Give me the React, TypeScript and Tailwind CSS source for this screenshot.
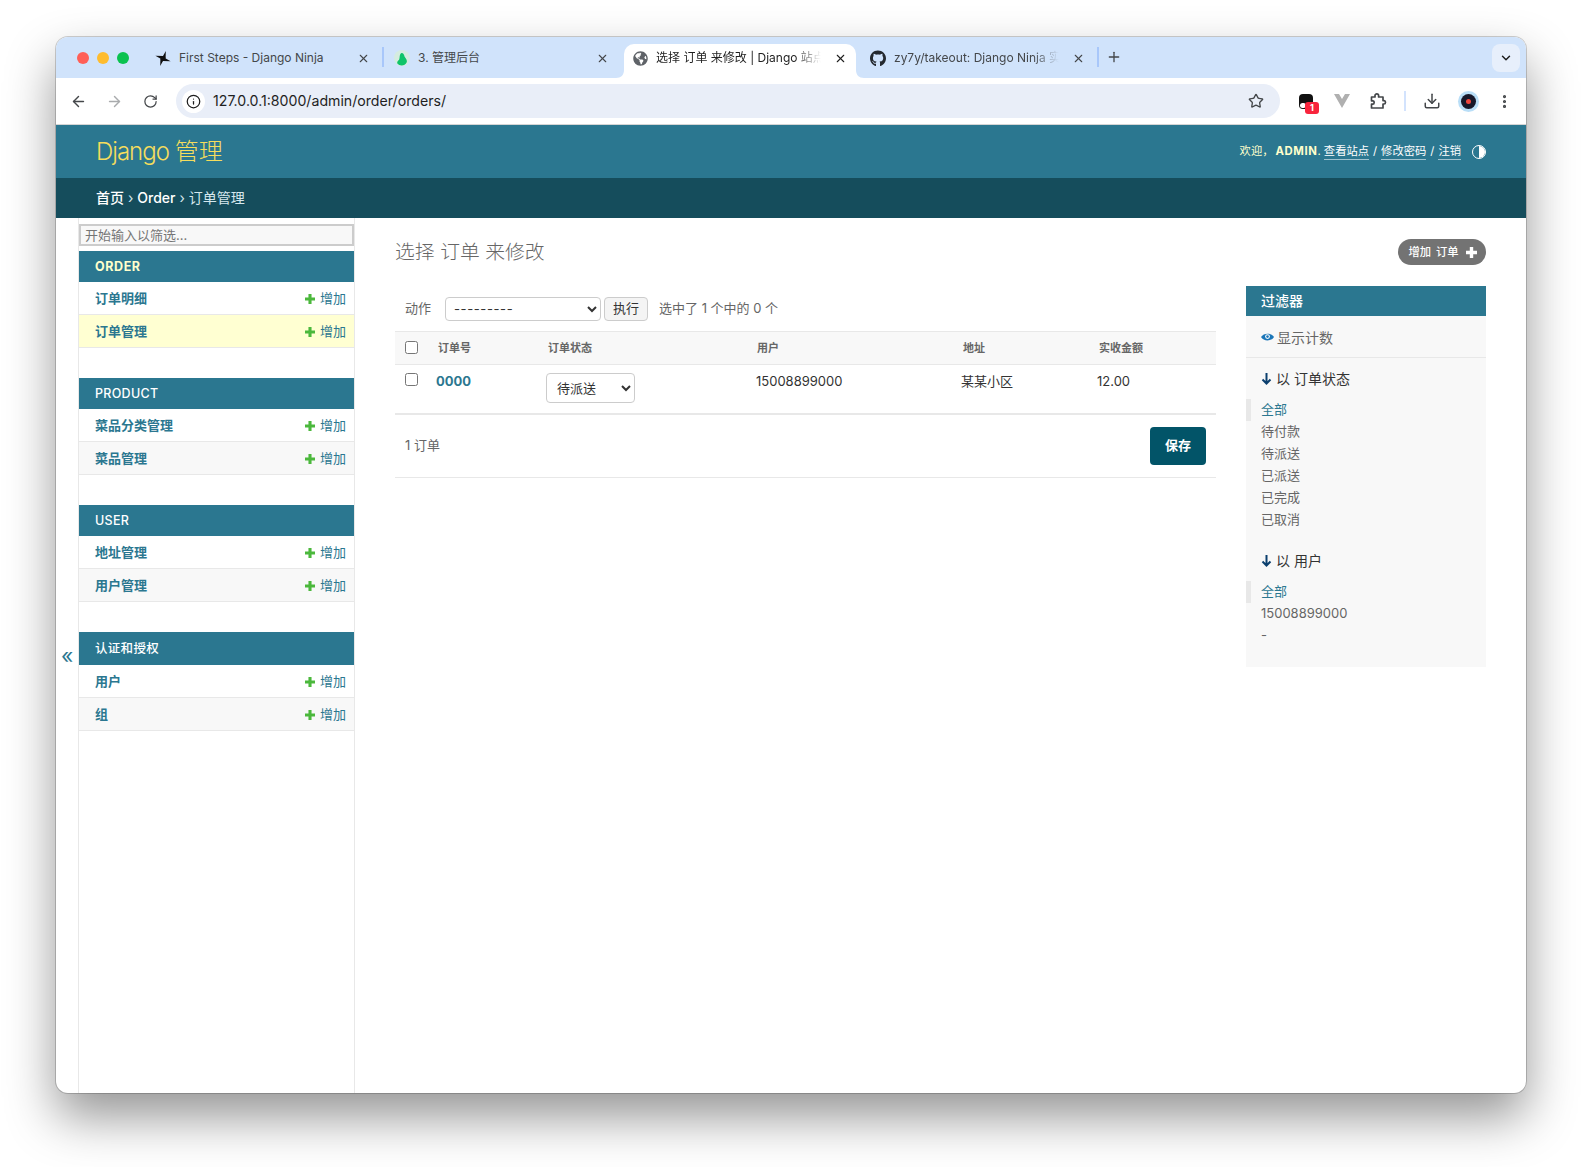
import {
  ArrowLeft,
  ArrowRight,
  ChevronDown,
  Download,
  EllipsisVertical,
  Info,
  Plus,
  RotateCw,
  Star,
  X,
} from "lucide-react";
import { FaGithub, FaGlobeAmericas } from "react-icons/fa";
import type { ReactNode } from "react";

const groups = [
  {
    title: "ORDER",
    active: true,
    rows: ["订单明细", "订单管理"],
  },
  {
    title: "PRODUCT",
    active: false,
    rows: ["菜品分类管理", "菜品管理"],
  },
  {
    title: "USER",
    active: false,
    rows: ["地址管理", "用户管理"],
  },
  {
    title: "认证和授权",
    active: false,
    rows: ["用户", "组"],
  },
];

function Shuriken() {
  const arm = "M5.4 9.4 L8.6 4.4 L10.8 0.4 L10.6 8.2 Z";
  return (
    <svg width="17" height="17" viewBox="0 0 16 16" fill="#111">
      <path d={arm} />
      <path d={arm} transform="rotate(90 8 8)" />
      <path d={arm} transform="rotate(180 8 8)" />
      <path d={arm} transform="rotate(270 8 8)" />
    </svg>
  );
}

function Leaf() {
  return (
    <svg width="16" height="16" viewBox="0 0 16 16">
      <circle cx="8" cy="8" r="8" fill="#d5ecdf" />
      <path d="M7.5 3 C9.8 3 10.2 5.5 10.8 7 C12 8.5 13.5 10.5 12.6 12.6 C11 16.2 5.5 16.4 3.4 13.6 C2.6 12.2 4.2 10.5 5.2 9.5 C6 8 5.2 4 7.5 3 Z" fill="#0fc468" />
    </svg>
  );
}

function AddIcon({ color, size }: { color: string; size: number }) {
  return (
    <svg width={size} height={size} viewBox="0 0 11 11" fill={color}>
      <path d="M3.8 0 H7.2 V3.8 H11 V7.2 H7.2 V11 H3.8 V7.2 H0 V3.8 H3.8 Z" />
    </svg>
  );
}

function Tab({
  icon,
  title,
  active,
  fade,
}: {
  icon: ReactNode;
  title: string;
  active?: boolean;
  fade?: boolean;
}) {
  return (
    <div
      className={
        active
          ? "relative flex h-[34px] w-[232px] items-center rounded-t-[10px] bg-white pb-[6px] pl-[8px] pr-[9px]"
          : "relative flex h-[28px] w-[232px] items-center pl-[8px] pr-[9px]"
      }
    >
      {active && (
        <>
          <svg className="absolute bottom-0 left-[-8px]" width="8" height="8" viewBox="0 0 8 8">
            <path d="M8 0 V8 H0 C5 8 8 5 8 0 Z" fill="#fff" />
          </svg>
          <svg className="absolute bottom-0 right-[-8px]" width="8" height="8" viewBox="0 0 8 8">
            <path d="M0 0 V8 H8 C3 8 0 5 0 0 Z" fill="#fff" />
          </svg>
        </>
      )}
      <span className="flex w-[16px] shrink-0 items-center justify-center">{icon}</span>
      <span
        className={
          (active ? "text-[#1f1f1f] " : "text-[#44474a] ") +
          (fade ? "[mask-image:linear-gradient(to_right,black_82%,transparent_97%)] " : "") +
          "ml-[8px] min-w-0 flex-1 text-[12px] leading-[16px] whitespace-nowrap"
        }
      >
        {title}
      </span>
      <X size={13} strokeWidth={2} className={active ? "ml-[8px] text-[#1f1f1f]" : "ml-[8px] text-[#44474a]"} />
    </div>
  );
}

function Browser() {
  return (
    <>
      <div className="flex h-[41px] items-end bg-[#d0e3fb] pr-[6px]">
        <div className="flex w-[91px] items-center gap-[8px] self-center pl-[21px] pt-[1px]">
          <span className="h-[12px] w-[12px] rounded-full bg-[#ff5f57]" />
          <span className="h-[12px] w-[12px] rounded-full bg-[#febc2e]" />
          <span className="h-[12px] w-[12px] rounded-full bg-[#0ac24f]" />
        </div>
        <div className="flex flex-1 items-end">
          <div className="mb-[6px]">
            <Tab icon={<Shuriken />} title="First Steps - Django Ninja" />
          </div>
          <span className="mx-[2.5px] mb-[11px] h-[20px] w-[2px] bg-[#a8c7fa]" />
          <div className="mb-[6px]">
            <Tab icon={<Leaf />} title="3. 管理后台" />
          </div>
          <span className="w-[6px]" />
          <Tab active fade icon={<FaGlobeAmericas size={15} className="text-[#5f6368]" />} title="选择 订单 来修改 | Django 站点" />
          <span className="w-[6px]" />
          <div className="mb-[6px]">
            <Tab fade icon={<FaGithub size={17} className="text-[#24292f]" />} title="zy7y/takeout: Django Ninja 实" />
          </div>
          <span className="mb-[11px] ml-[3px] h-[20px] w-[2px] bg-[#a8c7fa]" />
          <Plus size={16} strokeWidth={2} className="mb-[13px] ml-[7px] text-[#44474a]" />
        </div>
        <div className="mb-[6px] flex h-[28px] w-[28px] items-center justify-center rounded-[8px] bg-[#e7effb]">
          <ChevronDown size={14} strokeWidth={2.5} className="text-[#1f1f1f]" />
        </div>
      </div>
      <div className="flex h-[47px] items-center rounded-t-[10px] border-b border-[#d5d5d5] bg-white pl-[4px]">
        <div className="flex h-[36px] w-[36px] items-center justify-center">
          <ArrowLeft size={17} strokeWidth={2} className="text-[#44474a]" />
        </div>
        <div className="flex h-[36px] w-[36px] items-center justify-center">
          <ArrowRight size={17} strokeWidth={2} className="text-[#a9abad]" />
        </div>
        <div className="flex h-[36px] w-[36px] items-center justify-center">
          <RotateCw size={15} strokeWidth={2} className="text-[#44474a]" />
        </div>
        <div className="ml-[8px] flex h-[34px] w-[1104px] items-center rounded-full bg-[#e9eef8] pl-[6px] pr-[16px]">
          <span className="flex h-[23px] w-[23px] items-center justify-center rounded-full bg-white">
            <Info size={15} strokeWidth={2} className="text-[#1f1f1f]" />
          </span>
          <span className="ml-[8px] flex-1 text-[14.15px] leading-[18px] text-[#1f1f1f]">127.0.0.1:8000/admin/order/orders/</span>
          <Star size={16} strokeWidth={2} className="text-[#44474a]" />
        </div>
        <div className="ml-[8px] flex h-[36px] w-[36px] items-center justify-center">
          <span className="relative h-[15px] w-[14px] rounded-[4px] bg-[#111]">
            <span className="absolute bottom-[1px] left-[1px] h-[5px] w-[6px] rounded-full bg-white" />
            <span className="absolute left-[6px] top-[8px] flex h-[12px] w-[14px] items-center justify-center rounded-[3px] bg-[#f8243c] text-[9px] font-bold leading-none text-white">1</span>
          </span>
        </div>
        <div className="flex h-[36px] w-[36px] items-center justify-center">
          <svg width="16" height="16" viewBox="0 0 16 16">
            <path d="M0 1 H5 L8 6 L11 1 H16 L8 15 Z" fill="#b0b0b0" />
          </svg>
        </div>
        <div className="flex h-[36px] w-[36px] items-center justify-center">
          <svg width="18" height="18" viewBox="0 0 18 18" fill="none" stroke="#44474a" strokeWidth="1.7" strokeLinejoin="round">
            <path d="M2.5 5 H6 V3.6 C6 1.4 9.6 1.4 9.6 3.6 V5 H14 V8.6 H15 C17 8.6 17 12 15 12 H14 V16 H2.5 V12.2 H3.8 C5.6 12.2 5.6 8.8 3.8 8.8 H2.5 Z" />
          </svg>
        </div>
        <span className="mx-[8px] h-[20px] w-[2px] bg-[#d3e3fd]" />
        <div className="flex h-[36px] w-[36px] items-center justify-center">
          <Download size={18} strokeWidth={2} className="text-[#44474a]" />
        </div>
        <div className="flex h-[36px] w-[36px] items-center justify-center">
          <span className="flex h-[21px] w-[21px] items-center justify-center rounded-full bg-[#b9def7]">
            <span className="flex h-[15px] w-[15px] items-center justify-center rounded-full bg-[#17182a]">
              <span className="h-[5px] w-[5px] rounded-full bg-[#f0443c]" />
            </span>
          </span>
        </div>
        <div className="flex h-[36px] w-[36px] items-center justify-center">
          <EllipsisVertical size={17} strokeWidth={2.5} className="text-[#44474a]" />
        </div>
      </div>
    </>
  );
}

function Sidebar() {
  return (
    <div className="flex shrink-0">
      <div className="flex w-[22px] items-start justify-center pt-[423px] text-[21px] leading-[30px] text-[#2b7790]">«</div>
      <div className="w-[277px] border-x border-[#e8e8e8]">
        <div className="mb-[5px] mt-[6px] h-[22px]">
          <input
            placeholder="开始输入以筛选..."
            className="block h-[22px] w-full border-2 border-[#cccccc] bg-[#f8f8f8] px-[4px] text-[13px] outline-none placeholder:text-[#757575]"
          />
        </div>
        {groups.map((group, g) => (
          <div key={group.title} className="mb-[30px]">
            <h2
              className={
                (g === 3 ? "h-[33px] " : "h-[31px] ") +
                (group.active
                  ? "flex items-center bg-[#2b7790] pl-[16px] pt-[1px] text-[12.5px] font-bold tracking-[0.6px] text-[#ffffcc]"
                  : "flex items-center bg-[#2b7790] pl-[16px] pt-[1px] text-[12.5px] font-medium tracking-[0.3px] text-white")
              }
            >
              {group.title}
            </h2>
            {group.rows.map((row, i) => (
              <div
                key={row}
                className={
                  "flex h-[33px] items-center justify-between border-b border-[#e8e8e8] pl-[16px] pr-[8px] pt-[1px] " +
                  (i === 0 ? "bg-white" : group.active ? "bg-[#ffffd2]" : "bg-[#f8f8f8]")
                }
              >
                <a className="text-[13px] font-semibold text-[#2b7790]">{row}</a>
                <a className="flex items-center gap-[5px] text-[13px] text-[#2b7790]">
                  <AddIcon color="#4bb83c" size={10} />
                  增加
                </a>
              </div>
            ))}
          </div>
        ))}
      </div>
    </div>
  );
}

function ChangeList() {
  return (
    <div className="w-[821px] pt-[11px]">
      <div className="mb-[10px] flex h-[24px] items-center text-[13px] text-[#666666]">
        <span className="ml-[10px] w-[40px]">动作</span>
        <select className="h-[24px] w-[156px] rounded-[4px] border border-[#cccccc] bg-white px-[4px] text-[13px] tracking-[0.6px] text-[#333333]">
          <option>---------</option>
        </select>
        <button className="ml-[3px] h-[24px] w-[44px] rounded-[4px] border border-[#cccccc] bg-[#f4f4f4] text-[13px] text-[#333333]">执行</button>
        <span className="ml-[11px]">选中了 1 个中的 0 个</span>
      </div>
      <table className="w-full table-fixed border-collapse">
        <colgroup>
          <col className="w-[41px]" />
          <col className="w-[110px]" />
          <col className="w-[209px]" />
          <col className="w-[206px]" />
          <col className="w-[136px]" />
          <col />
        </colgroup>
        <thead>
          <tr className="h-[33px] border-y border-[#e8e8e8] bg-[#f8f8f8] text-left text-[11px] font-semibold text-[#666666]">
            <th className="pl-[10px] align-middle">
              <input type="checkbox" className="mb-[2px] block h-[13px] w-[13px]" />
            </th>
            <th className="pl-[2px] font-semibold">订单号</th>
            <th className="pl-[2px] font-semibold">订单状态</th>
            <th className="pl-[2px] font-semibold">用户</th>
            <th className="pl-[2px] font-semibold">地址</th>
            <th className="pl-[2px] font-semibold">实收金额</th>
          </tr>
        </thead>
        <tbody>
          <tr className="h-[49px] border-b-2 border-[#e8e8e8] align-top text-[13px] text-[#333333]">
            <td className="pl-[10px] pt-[8px]">
              <input type="checkbox" className="block h-[13px] w-[13px]" />
            </td>
            <td className="pt-[7px] font-bold leading-[18px] text-[#2b7790]">0000</td>
            <td className="pt-[8px]">
              <select className="h-[30px] w-[89px] rounded-[4px] border border-[#cccccc] bg-white px-[6px] text-[13px] text-[#333333]">
                <option>待派送</option>
              </select>
            </td>
            <td className="pl-[1px] pt-[7px] leading-[18px]">15008899000</td>
            <td className="pt-[7px] leading-[18px]">某某小区</td>
            <td className="pt-[7px] leading-[18px]">12.00</td>
          </tr>
        </tbody>
      </table>
      <div className="flex h-[63px] items-center justify-between border-b border-[#e8e8e8] px-[10px] text-[13px] text-[#666666]">
        <span className="pt-[1px]">1 订单</span>
        <button className="h-[38px] w-[56px] rounded-[4px] bg-[#025468] text-[13px] font-semibold text-white">保存</button>
      </div>
    </div>
  );
}

function FilterList({ items }: { items: string[] }) {
  return (
    <ul className="text-[13px] text-[#666666]">
      {items.map((item, i) => (
        <li
          key={item}
          className={
            i === 0
              ? "flex h-[22px] items-center border-l-[5px] border-[#e8e8e8] pl-[10px] text-[#2b7790]"
              : "flex h-[22px] items-center pl-[15px]"
          }
        >
          {item}
        </li>
      ))}
    </ul>
  );
}

function FilterHeading({ children }: { children: ReactNode }) {
  return (
    <h3 className="flex h-[41px] items-center gap-[4px] pl-[15px] text-[14px] text-[#333333]">
      <svg width="11" height="13" viewBox="0 0 11 13" fill="none" stroke="#0b3f6e" strokeWidth="2">
        <path d="M5.5 1 V11.5 M1.5 7.5 L5.5 11.5 L9.5 7.5" />
      </svg>
      {children}
    </h3>
  );
}

function Filters() {
  return (
    <div className="h-[381px] w-[240px] bg-[#f8f8f8]">
      <h2 className="flex h-[30px] items-center bg-[#2b7790] pb-[1px] pl-[15px] text-[14px] font-medium text-white">过滤器</h2>
      <div className="flex h-[42px] items-center gap-[3px] border-b border-[#e8e8e8] pl-[15px] pt-[1px] text-[14px] text-[#666666]">
        <svg width="13" height="10" viewBox="0 0 13 10">
          <path d="M0 5 C2.5 0.5 10.5 0.5 13 5 C10.5 9.5 2.5 9.5 0 5 Z" fill="#1b76b8" />
          <circle cx="6.5" cy="4.6" r="2.4" fill="#ffffff" />
          <circle cx="6.5" cy="4.6" r="1.3" fill="#1b76b8" />
        </svg>
        显示计数
      </div>
      <FilterHeading>以 订单状态</FilterHeading>
      <FilterList items={["全部", "待付款", "待派送", "已派送", "已完成", "已取消"]} />
      <div className="mt-[9px]">
        <FilterHeading>以 用户</FilterHeading>
      </div>
      <FilterList items={["全部", "15008899000", "-"]} />
    </div>
  );
}

export default function App() {
  return (
    <div className="h-[1167px] w-[1582px] overflow-hidden bg-white pl-[56px] pt-[37px] font-['Inter','Noto_Sans_CJK_SC',sans-serif]">
      <div className="flex h-[1056px] w-[1470px] flex-col overflow-hidden rounded-[12px] bg-white shadow-[0_24px_50px_rgba(0,0,0,0.42),0_0_0_1px_rgba(0,0,0,0.18)]">
        <Browser />
        <div className="flex h-[53px] shrink-0 items-center justify-between bg-[#2b7790] px-[40px]">
          <h1 className="text-[24px] font-light text-[#f5dd5d]">
            <span className="tracking-[-1px]">Django</span>
            <span className="ml-[-1px]"> 管理</span>
          </h1>
          <div className="flex items-center text-[11.3px] text-white">
            <span className="text-[#ffffcc]">欢迎，</span>
            <strong className="ml-[2px] font-bold tracking-[0.6px] text-[#ffffcc]">ADMIN</strong>
            <span className="text-[#ffffcc]">.&nbsp;</span>
            <a className="border-b border-[#9fc3cf]">查看站点</a>
            <span className="mx-[4px]">/</span>
            <a className="border-b border-[#9fc3cf]">修改密码</a>
            <span className="mx-[4px]">/</span>
            <a className="border-b border-[#9fc3cf]">注销</a>
            <span className="relative ml-[11px] h-[14px] w-[14px] overflow-hidden rounded-full border border-white">
              <span className="absolute bottom-0 right-0 top-0 w-1/2 bg-white" />
            </span>
          </div>
        </div>
        <div className="flex h-[40px] shrink-0 items-center bg-[#154d5c] pb-[1px] pl-[40px] text-[14px] text-[#d5e8ee]">
          <a className="font-medium text-white">首页</a>
          <span>&nbsp;›&nbsp;</span>
          <a className="font-medium text-white">Order</a>
          <span>&nbsp;›&nbsp;</span>
          <span>订单管理</span>
        </div>
        <div className="flex flex-1">
          <Sidebar />
          <main className="flex-1 px-[40px] pt-[21px]">
            <div className="flex h-[26px] items-center justify-between">
              <h1 className="pt-[2px] text-[19.8px] font-light text-[#666666]">选择 订单 来修改</h1>
              <a className="flex h-[26px] w-[88px] items-center justify-center gap-[7px] rounded-full bg-[#737373] pl-[1px] text-[11.3px] font-medium text-white [word-spacing:2px]">
                增加 订单
                <AddIcon color="#ffffff" size={11} />
              </a>
            </div>
            <div className="mt-[21px] flex gap-[30px]">
              <ChangeList />
              <Filters />
            </div>
          </main>
        </div>
      </div>
    </div>
  );
}
